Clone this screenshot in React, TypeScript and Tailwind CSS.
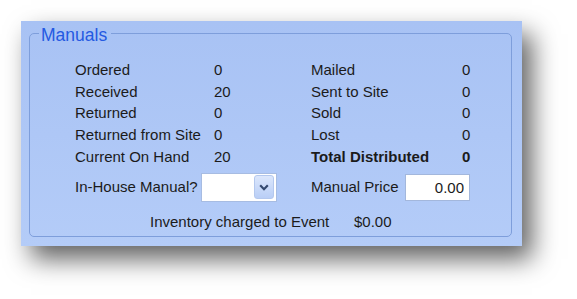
import { ChangeEvent, useState } from 'react';

type Row = { label: string; value: string; bold?: boolean };

const leftRows: Row[] = [
  { label: 'Ordered', value: '0' },
  { label: 'Received', value: '20' },
  { label: 'Returned', value: '0' },
  { label: 'Returned from Site', value: '0' },
  { label: 'Current On Hand', value: '20' },
];

const rightRows: Row[] = [
  { label: 'Mailed', value: '0' },
  { label: 'Sent to Site', value: '0' },
  { label: 'Sold', value: '0' },
  { label: 'Lost', value: '0' },
  { label: 'Total Distributed', value: '0', bold: true },
];

function ComboBox() {
  return (
    <div className="flex h-[29px] w-[76px] items-center justify-end border border-[#a7bce2] bg-white pr-[2px]">
      <div className="flex h-[24px] w-[20px] items-center justify-center rounded-[3px] border border-[#b4c8ee] bg-gradient-to-b from-[#dce7fc] to-[#b9cef6]">
        <svg width="10" height="7" viewBox="0 0 10 7">
          <path d="M1.2 1.3 L5 5.2 L8.8 1.3" fill="none" stroke="#34496f" strokeWidth="2.2" />
        </svg>
      </div>
    </div>
  );
}

export default function App() {
  const [price, setPrice] = useState('0.00');

  return (
    <div className="h-[299px] w-[577px] overflow-hidden bg-white pl-[21px] pt-[21px] font-['Liberation_Sans',Arial,sans-serif] text-[15px] text-[#1b1b1b]">
      <div className="h-[225px] w-[501px] bg-gradient-to-b from-[#a8c2f4] to-[#b4ccf8] pb-[9px] pl-[8px] pr-[10px] pt-[1px] shadow-[10px_13px_24px_rgba(0,0,0,0.62)]">
        <fieldset className="h-full min-w-0 rounded-[5px] border border-[#7e9edb]">
          <legend className="ml-[9px] pl-[2px] pr-[4px] pt-[4px] text-[17.5px] leading-[18px] text-[#2459e2]">
            Manuals
          </legend>

          <div className="mt-[15px] grid grid-cols-[139px_97px_151px_auto] pl-[45px] leading-[21.7px]">
            {leftRows.map((row, i) => {
              const right = rightRows[i];
              return [
                <span key={`l${i}`}>{row.label}</span>,
                <span key={`lv${i}`}>{row.value}</span>,
                <span key={`r${i}`} className={right.bold ? 'font-bold' : ''}>
                  {right.label}
                </span>,
                <span key={`rv${i}`} className={right.bold ? 'font-bold' : ''}>
                  {right.value}
                </span>,
              ];
            })}
          </div>

          <div className="mt-[5px] flex items-center pl-[45px]">
            <span className="w-[126px]">In-House Manual?</span>
            <ComboBox />
            <span className="ml-[34px] w-[94px]">Manual Price</span>
            <input
              className="h-[27px] w-[65px] border border-[#a3b7dc] bg-white pr-[5px] text-right text-[15px] text-[#1b1b1b] outline-none"
              value={price}
              onChange={(e: ChangeEvent<HTMLInputElement>) => setPrice(e.target.value)}
            />
          </div>

          <div className="mt-[10px] flex pl-[120px] leading-[20px]">
            <span className="w-[204px]">Inventory charged to Event</span>
            <span>$0.00</span>
          </div>
        </fieldset>
      </div>
    </div>
  );
}
